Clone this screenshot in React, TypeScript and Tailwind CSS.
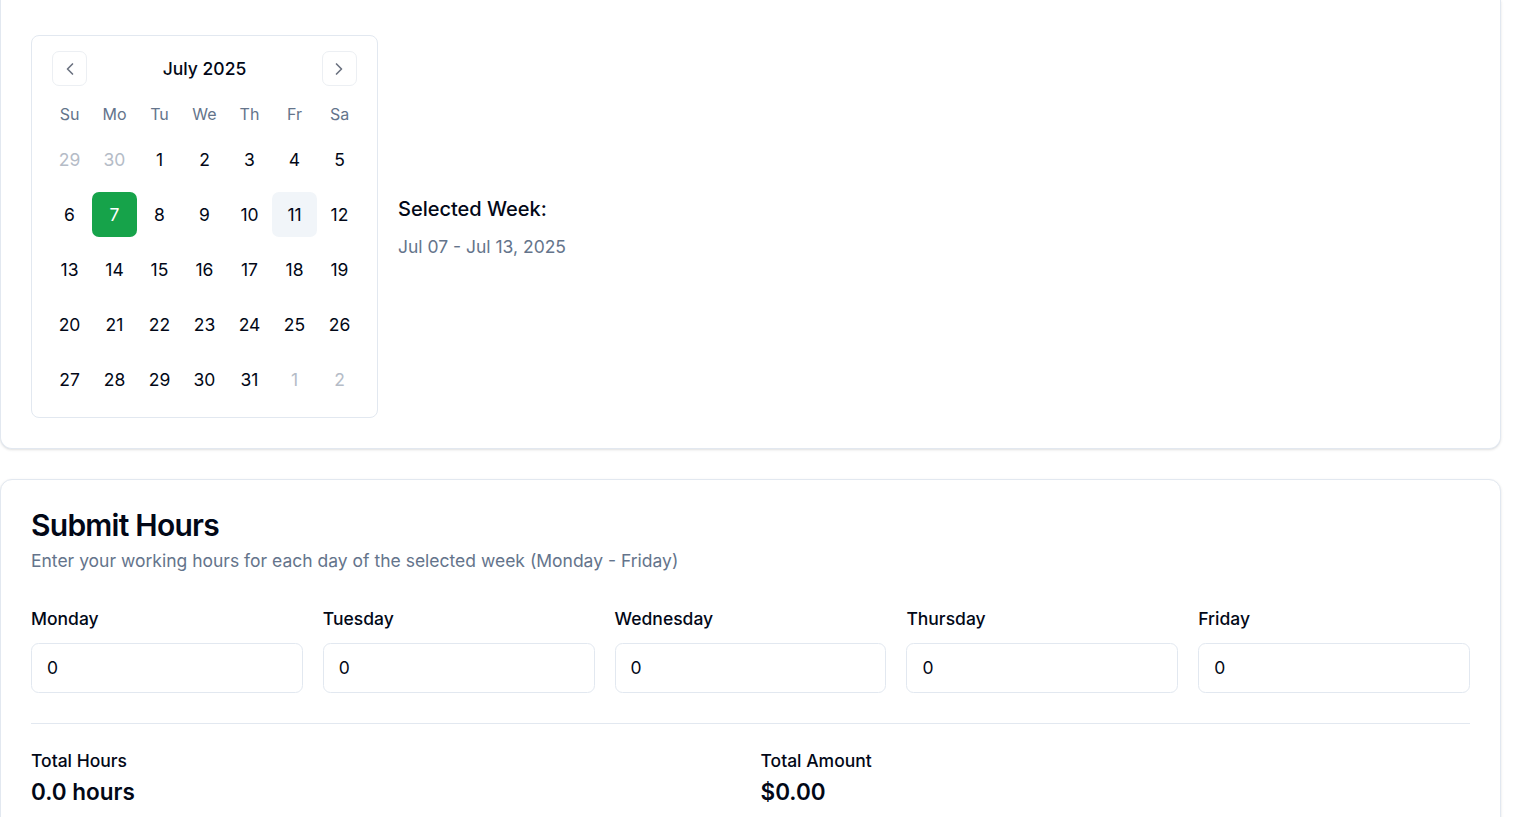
import React from "react";
import { ChevronLeft, ChevronRight } from "lucide-react";

const weeks: { d: number; out?: boolean }[][] = [
  [{ d: 29, out: true }, { d: 30, out: true }, { d: 1 }, { d: 2 }, { d: 3 }, { d: 4 }, { d: 5 }],
  [{ d: 6 }, { d: 7 }, { d: 8 }, { d: 9 }, { d: 10 }, { d: 11 }, { d: 12 }],
  [{ d: 13 }, { d: 14 }, { d: 15 }, { d: 16 }, { d: 17 }, { d: 18 }, { d: 19 }],
  [{ d: 20 }, { d: 21 }, { d: 22 }, { d: 23 }, { d: 24 }, { d: 25 }, { d: 26 }],
  [{ d: 27 }, { d: 28 }, { d: 29 }, { d: 30 }, { d: 31 }, { d: 1, out: true }, { d: 2, out: true }],
];

const weekdays = ["Su", "Mo", "Tu", "We", "Th", "Fr", "Sa"];
const days = ["Monday", "Tuesday", "Wednesday", "Thursday", "Friday"];

function Calendar() {
  return (
    <div className="w-[347px] rounded-[8px] border border-[#e2e8f0] bg-white p-[15px]">
      <div className="flex h-[35px] items-center justify-between px-[5px]">
        <button className="flex h-[35px] w-[35px] items-center justify-center rounded-[7px] border border-[#eceff3] text-[#6b7280]">
          <ChevronLeft size={20} strokeWidth={2} />
        </button>
        <div className="pt-[1px] text-[17.5px] font-medium text-[#020817]">July 2025</div>
        <button className="flex h-[35px] w-[35px] items-center justify-center rounded-[7px] border border-[#eceff3] text-[#6b7280]">
          <ChevronRight size={20} strokeWidth={2} />
        </button>
      </div>
      <div className="mt-[18px] grid h-[20px] grid-cols-7">
        {weekdays.map((w) => (
          <div key={w} className="flex items-center justify-center text-[16px] leading-[20px] text-[#64748b]">
            {w}
          </div>
        ))}
      </div>
      <div className="mt-[13px] flex flex-col gap-[10px]">
        {weeks.map((row, i) => (
          <div key={i} className="grid grid-cols-7">
            {row.map((c, j) => {
              const selected = i === 1 && j === 1;
              const today = i === 1 && j === 5;
              let cls = "text-[#020817]";
              if (c.out) cls = "text-[#b5bcc7]";
              if (selected) cls = "bg-[#16a34a] text-white";
              if (today) cls = "bg-[#f1f5f9] text-[#020817]";
              return (
                <div
                  key={j}
                  className={`flex h-[45px] w-[45px] items-center justify-center rounded-[7px] pt-[2px] text-[17.5px] ${cls}`}
                >
                  {c.d}
                </div>
              );
            })}
          </div>
        ))}
      </div>
    </div>
  );
}

export default function App() {
  return (
    <div
      className="min-h-screen w-[1535px] bg-white pr-[34px] text-[#020817]"
      style={{ fontFamily: "Inter, 'Noto Sans', sans-serif" }}
    >
      <div className="rounded-b-[12px] border border-t-0 border-[#e2e8f0] bg-white px-[30px] pb-[30px] pt-[35px] shadow-sm">
        <div className="flex items-center gap-[20px]">
          <Calendar />
          <div className="flex flex-col">
            <div className="text-[20px] font-medium leading-[28px] text-[#020817]">Selected Week:</div>
            <div className="mt-[11px] text-[17.5px] leading-[25px] text-[#64748b]">Jul 07 - Jul 13, 2025</div>
          </div>
        </div>
      </div>

      <div className="mt-[30px] rounded-[12px] border border-[#e2e8f0] bg-white p-[30px] shadow-sm">
        <h2 className="text-[30px] font-semibold leading-[30px] tracking-tight text-[#020817]">Submit Hours</h2>
        <p className="mt-[7.5px] text-[17.5px] leading-[25px] text-[#64748b]">
          Enter your working hours for each day of the selected week (Monday - Friday)
        </p>
        <div className="mt-[37px] grid grid-cols-5 gap-[20px]">
          {days.map((d) => (
            <div key={d} className="flex flex-col">
              <label className="text-[17.5px] font-medium leading-[18px] text-[#020817]">{d}</label>
              <div className="mt-[15px] flex h-[50px] items-center rounded-[7.5px] border border-[#e2e8f0] bg-white px-[15px] pt-[1px] text-[17.5px] text-[#020817]">
                0
              </div>
            </div>
          ))}
        </div>
        <div className="mt-[30px] border-t border-[#e2e8f0] pt-[24px]">
          <div className="grid grid-cols-2 gap-[20px]">
            <div>
              <div className="text-[17.5px] font-medium leading-[25px] text-[#020817]">Total Hours</div>
              <div className="mt-[4px] text-[22.5px] font-semibold leading-[30px] text-[#020817]">0.0 hours</div>
            </div>
            <div>
              <div className="text-[17.5px] font-medium leading-[25px] text-[#020817]">Total Amount</div>
              <div className="mt-[4px] text-[22.5px] font-semibold leading-[30px] text-[#020817]">$0.00</div>
            </div>
          </div>
        </div>
      </div>
    </div>
  );
}
